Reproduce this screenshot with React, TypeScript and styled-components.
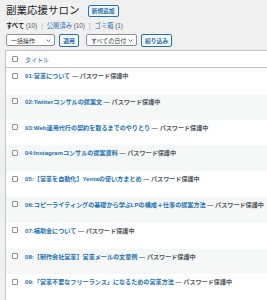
import styled, { createGlobalStyle } from 'styled-components';

const GlobalStyle = createGlobalStyle`
  html, body {
    margin: 0;
    padding: 0;
    background: #f0f0f1;
    overflow: hidden;
  }
  body {
    font-family: "Liberation Sans", "Noto Sans CJK JP", sans-serif;
    color: #3c434a;
  }
`;

const posts = [
     '01:営業について',
     '02:Twitterコンサルの提案文',
     '03:Web運用代行の契約を取るまでのやりとり',
     '04:Instagramコンサルの提案資料',
     '05:【営業を自動化】Yentaの使い方まとめ',
     '06:コピーライティングの基礎から学ぶLPの構成＋仕事の提案方法',
     '07:補助金について',
     '08:【制作会社営業】営業メールの文章例',
     '09:「営業不要なフリーランス」になるための営業方法',
];

function Chevron() {
     return (
          <svg width="5" height="3" viewBox="0 0 10 6" fill="none">
               <path d="M1 1l4 4 4-4" stroke="#50575e" strokeWidth="1.6" />
          </svg>
     );
}

export default function App() {
     return (
          <Page>
               <GlobalStyle />
               <Header>
                    <Title>副業応援サロン</Title>
                    <AddButton>新規追加</AddButton>
               </Header>
               <SubSub>
                    <Current>すべて <Count>(10)</Count></Current>
                    <Sep>|</Sep>
                    <SubLink>公開済み <Count>(10)</Count></SubLink>
                    <Sep>|</Sep>
                    <SubLink>ゴミ箱 <Count>(1)</Count></SubLink>
               </SubSub>
               <TableNav>
                    <Select $width={49}>一括操作<Chevron /></Select>
                    <Button $width={20}>適用</Button>
                    <Select $width={51}>すべての日付<Chevron /></Select>
                    <Button $width={31}>絞り込み</Button>
               </TableNav>
               <Table>
                    <HeadRow>
                         <Check />
                         <HeadLabel>タイトル</HeadLabel>
                    </HeadRow>
                    {posts.map((title, i) => (
                         <Row key={title} $striped={i % 2 === 1}>
                              <Check />
                              <RowText>
                                   <PostLink>{title}</PostLink>
                                   <PostState> — パスワード保護中</PostState>
                              </RowText>
                         </Row>
                    ))}
               </Table>
          </Page>
     );
}

const Page = styled.div`
     width: 267px;
     height: 300px;
     overflow: hidden;
`;

const Header = styled.div`
     height: 20px;
     display: flex;
     align-items: center;
     gap: 8px;
     padding-left: 6px;
`;

const Title = styled.h1`
     margin: 0;
     font-size: 10.5px;
     font-weight: 400;
     line-height: 14px;
     color: #1d2327;
     font-family: "Noto Sans CJK JP", sans-serif;
`;

const AddButton = styled.button`
     height: 12px;
     width: 31px;
     padding: 0;
     margin-top: 1px;
     border: 1px solid #2271b1;
     border-radius: 2px;
     background: #f6f7f7;
     color: #2271b1;
     font-family: "Noto Sans CJK JP", sans-serif;
     font-size: 5.8px;
     font-weight: 600;
     line-height: 10px;
`;

const SubSub = styled.div`
     height: 10px;
     margin-top: 1px;
     padding-left: 6px;
     display: flex;
     align-items: center;
     gap: 4px;
     font-size: 6.3px;
     line-height: 10px;
`;

const Current = styled.span`
     color: #1d2327;
     font-weight: 700;
`;

const SubLink = styled.span`
     color: #2271b1;
`;

const Count = styled.span`
     color: #50575e;
     font-weight: 400;
`;

const Sep = styled.span`
     color: #a7aaad;
`;

const TableNav = styled.div`
     height: 12px;
     margin-top: 3px;
     padding-left: 6px;
     display: flex;
     align-items: center;
`;

const Select = styled.div<{ $width: number }>`
     box-sizing: border-box;
     width: ${(p) => p.$width}px;
     height: 12px;
     margin-right: 4px;
     padding: 0 3px 0 4px;
     display: flex;
     align-items: center;
     justify-content: space-between;
     background: #fff;
     border: 1px solid #8c8f94;
     border-radius: 2px;
     color: #2c3338;
     font-size: 6px;
`;

const Button = styled.div<{ $width: number }>`
     box-sizing: border-box;
     width: ${(p) => p.$width}px;
     height: 13px;
     margin-right: 7px;
     display: flex;
     align-items: center;
     justify-content: center;
     background: #f6f7f7;
     border: 1px solid #2271b1;
     border-radius: 2px;
     color: #2271b1;
     font-size: 5.8px;
     font-weight: 600;
`;

const Table = styled.div`
     width: 300px;
     margin: 4px 0 0 5px;
     background: #fff;
     border-top: 1px solid #c3c4c7;
     border-left: 1px solid #c3c4c7;
`;

const HeadRow = styled.div`
     box-sizing: border-box;
     height: 17px;
     display: flex;
     align-items: center;
     border-bottom: 1px solid #c3c4c7;
`;

const Check = styled.span`
     box-sizing: border-box;
     flex: none;
     width: 6px;
     height: 6px;
     margin: 0 7px 0 6px;
     background: #fff;
     border: 1px solid #8c8f94;
     border-radius: 1px;
`;

const HeadLabel = styled.span`
     color: #2271b1;
     font-size: 6px;
`;

const Row = styled.div<{ $striped: boolean }>`
     box-sizing: border-box;
     height: 25.8px;
     padding-top: 4.5px;
     display: flex;
     align-items: flex-start;
     background: ${(p) => (p.$striped ? '#f6f7f7' : '#fff')};
`;

const RowText = styled.div`
     margin-top: -1.5px;
     white-space: nowrap;
     font-size: 6.1px;
     line-height: 9px;
     font-weight: 600;
`;

const PostLink = styled.span`
     color: #2271b1;
`;

const PostState = styled.span`
     color: #50575e;
`;
